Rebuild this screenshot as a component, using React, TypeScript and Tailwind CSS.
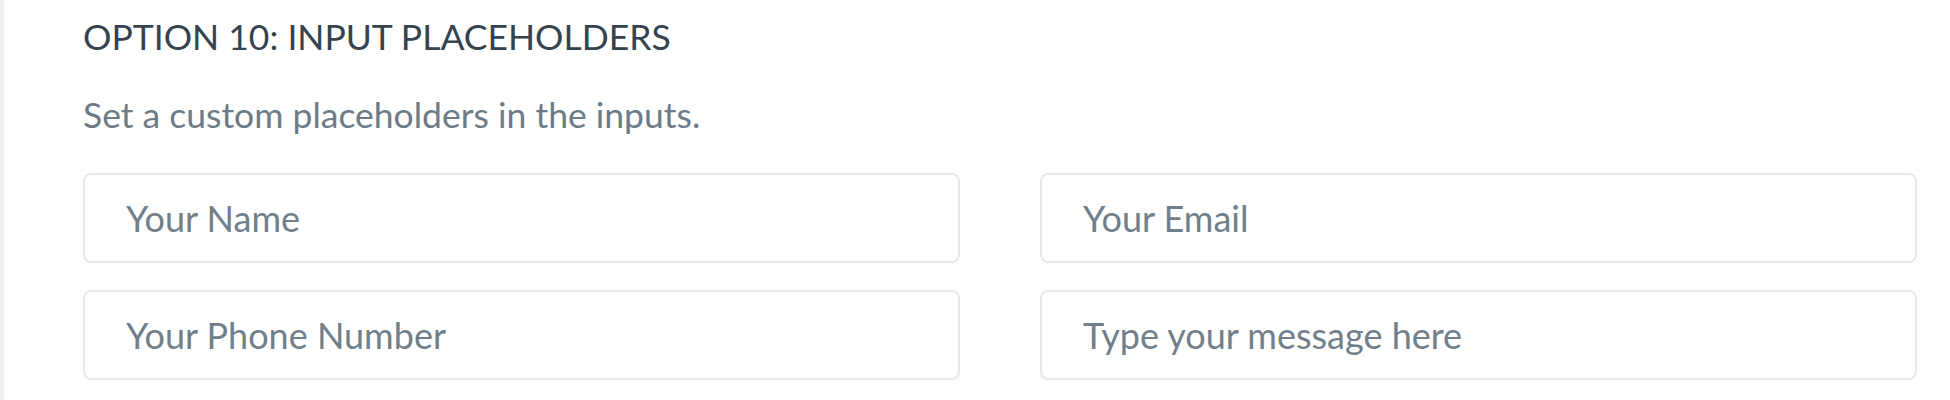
export default function App() {
  const fields = ['Your Name', 'Your Email', 'Your Phone Number', 'Type your message here'];

  return (
    <div className="flex min-h-[400px] bg-white font-['Lato',sans-serif]">
      {/* Sidebar edge */}
      <div className="w-[4px] shrink-0 bg-[#eef2f4]" />

      <div className="flex-1 pl-[79px] pr-[33px] pt-[16px]">
        <h2 className="text-[35.5px] leading-[1.2] text-[#34434e]">OPTION 10: INPUT PLACEHOLDERS</h2>
        <p className="mt-[35px] text-[35.5px] leading-[1.2] text-[#6d7b87]">Set a custom placeholders in the inputs.</p>

        {/* Inputs */}
        <div className="mt-[37px] grid grid-cols-2 gap-x-[80px] gap-y-[27px]">
          {fields.map((f) => (
            <input
              key={f}
              type="text"
              placeholder={f}
              className="h-[90px] w-full rounded-[8px] border-2 border-[#e4e9ed] bg-white px-[41px] text-[36px] text-[#34434e] outline-none placeholder:text-[#717f8b]"
            />
          ))}
        </div>
      </div>
    </div>
  );
}
